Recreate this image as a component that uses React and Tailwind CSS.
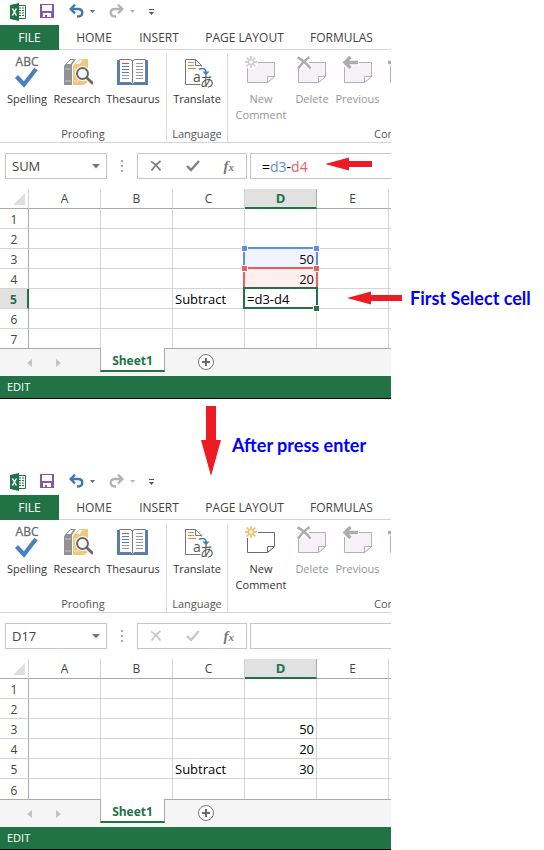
import React from "react";

const UI = "font-['Open_Sans','Noto_Sans',sans-serif]";

function ExcelLogo() {
  return (
    <svg width="16" height="18" viewBox="0 0 16 18" aria-hidden="true">
      <path d="M8 2.5h7.5v13H8z" fill="#fff" stroke="#217346" />
      <path d="M9 5h2M12 5h2M9 7.5h2M12 7.5h2M9 10h2M12 10h2M9 12.5h2M12 12.5h2" stroke="#217346" strokeWidth="1.2" />
      <path d="M0 2l9-2v18l-9-2z" fill="#217346" />
      <path d="M2.4 5.5l4 7M6.4 5.5l-4 7" stroke="#fff" strokeWidth="1.5" />
    </svg>
  );
}

function SaveIcon() {
  return (
    <svg width="14" height="14" viewBox="0 0 14 14" aria-hidden="true">
      <path d="M0 0h14v14H0z" fill="#8756a8" />
      <path d="M2 1h10v6H2zM3 9h8v4H3z" fill="#fff" />
      <path d="M5 11h2v2H5z" fill="#8756a8" />
    </svg>
  );
}

function UndoIcon({ flip, color }) {
  return (
    <svg width="15" height="14" viewBox="0 0 15 14" aria-hidden="true">
      <g transform={flip ? "translate(15 0) scale(-1 1)" : undefined} fill="none" stroke={color} strokeWidth="2.4">
        <path d="M6 .7L1.7 5 6 9.300" />
        <path d="M2 5h7c2.600 0 4.300 1.500 4.300 3.700S11.300 12.500 8 12.500" />
      </g>
    </svg>
  );
}

function Caret({ className }) {
  return (
    <svg width="5" height="3" viewBox="0 0 5 3" className={className} aria-hidden="true">
      <path d="M0 0h5L2.500 3z" fill="currentColor" />
    </svg>
  );
}

function SpellingIcon() {
  return (
    <svg width="32" height="37" viewBox="0 0 32 37" aria-hidden="true">
      <text x="16" y="12" textAnchor="middle" fontSize="12" fill="#686868" stroke="#686868" strokeWidth=".3" fontFamily="Open Sans">ABC</text>
      <path d="M5.500 22.500l7.500 8L25 15" fill="none" stroke="#4a80bd" strokeWidth="4.200" />
    </svg>
  );
}

function ResearchIcon() {
  return (
    <svg width="32" height="37" viewBox="0 0 32 37" aria-hidden="true">
      <path d="M3 12l7-7h5l-4 6v20H3z" fill="#929292" />
      <path d="M4.500 10.500l5-5h4l-4 5z" fill="#fff" stroke="#929292" />
      <path d="M4 15h6M4 27h6" stroke="#c4c4c4" />
      <path d="M12 12l7-7h8v23l-4 3H12z" fill="#edc87e" />
      <path d="M13.500 10.500l5-5h4l-4 5z" fill="#fff" stroke="#edc87e" />
      <path d="M13 15h5M13 27h5" stroke="#f7e3b9" />
      <circle cx="21.500" cy="19.500" r="6" fill="#fff" stroke="#fff" strokeWidth="3" />
      <path d="M26 24l6.500 6" stroke="#fff" strokeWidth="5" />
      <circle cx="21.500" cy="19.500" r="5.500" fill="#f6f6f6" stroke="#696969" strokeWidth="2" />
      <path d="M25.500 23.500l6.500 6.200" stroke="#696969" strokeWidth="2.800" />
    </svg>
  );
}

function ThesaurusIcon() {
  return (
    <svg width="32" height="37" viewBox="0 0 32 37" aria-hidden="true">
      <path d="M0 6h31v25H0z" fill="#4a80bd" />
      <path d="M2.500 5.500h11l2 1.500 2-1.500h11v23h-11l-2 1.500-2-1.500h-11z" fill="#fff" stroke="#7a7a7a" />
      <path d="M15.500 7v22" stroke="#7a7a7a" />
      <path d="M5 9.500h7" stroke="#d65532" strokeWidth="1.200" />
      <path d="M5 12.500h7M5 15.500h7M5 18.500h7" stroke="#4a80bd" />
      <path d="M5 21.500h7M5 24.500h7M19 9.500h7M19 12.500h7M19 15.500h7M19 18.500h7M19 21.500h7M19 24.500h7" stroke="#9a9a9a" />
    </svg>
  );
}

function TranslateIcon() {
  return (
    <svg width="32" height="37" viewBox="0 0 32 37" aria-hidden="true">
      <path d="M4.500 5.500h10l6 6v19h-16z" fill="#fff" />
      <path d="M20.500 12.500v-1l-6-6h-10v25h15" fill="none" stroke="#777" />
      <path d="M14.500 5.500v6h6" fill="none" stroke="#777" />
      <path d="M7 8.500h6M7 11.500h6M7 14.500h8" stroke="#e8893d" strokeWidth="1.200" />
      <path d="M18 15.500c4-2 7-1 7 3" fill="none" stroke="#4a80bd" strokeWidth="1.700" />
      <path d="M21.500 17.500h7L25 21.500z" fill="#4a80bd" />
      <path d="M20 22h12v11H20z" fill="#fff" />
      <text x="12" y="28" fontSize="14" fill="#555" fontFamily="Open Sans">a</text>
      <text x="19" y="32" fontSize="14" fill="#555" fontFamily="Noto Sans CJK JP">あ</text>
    </svg>
  );
}

function NoteIcon({ kind, active }) {
  const line = active ? "#6a6a6a" : "#b5b0b5";
  const mark = "#adadad";
  return (
    <svg width="32" height="37" viewBox="0 0 32 37" aria-hidden="true">
      <path d="M2.500 8.500h27v14l-7 6h-20z" fill={active ? "#fff" : "#f6f0f7"} stroke={line} />
      <path d="M22.500 28.500v-6h7z" fill="#fff" stroke={line} />
      {kind === "new" && (
        <g>
          <circle cx="6" cy="8" r="7" fill="#fff" />
          <path
            d="M6 2v4M6 10v4M0 8h4M8 8h4M1.700 3.700l3 3M7.300 9.300l3 3M10.300 3.700l-3 3M4.700 9.300l-3 3"
            stroke={active ? "#eec36f" : "#cfcfcf"}
            strokeWidth="1.800"
          />
          <circle cx="6" cy="8" r="2.400" fill="#fff" stroke={active ? "#eec36f" : "#cfcfcf"} strokeWidth="1.400" />
        </g>
      )}
      {kind === "delete" && (
        <g fill="none">
          <path d="M1.500 3.500c5 2 9 6 13 11M13.500 3C9 6 5 10 2 14.500" stroke="#fff" strokeWidth="6" />
          <path d="M1.500 3.500c5 2 9 6 13 11M13.500 3C9 6 5 10 2 14.500" stroke={mark} strokeWidth="2.600" />
        </g>
      )}
      {kind === "previous" && (
        <g fill="none">
          <path d="M8.500 2L2.500 8.500l6 6.500M3 8.500h14" stroke="#fff" strokeWidth="6" />
          <path d="M8.500 3L3 8.500 8.500 14M3 8.500h13" stroke={mark} strokeWidth="3.400" />
        </g>
      )}
      {kind === "next" && (
        <g fill="none">
          <path d="M0 8.500h15M10 3l5.500 5.500L10 14" stroke="#fff" strokeWidth="6" />
          <path d="M0 8.500h15M10 3l5.500 5.500L10 14" stroke={mark} strokeWidth="3.400" />
        </g>
      )}
    </svg>
  );
}

function RibbonButton({ icon, label, width, disabled, iconOnly }) {
  return (
    <button
      type="button"
      disabled={disabled}
      aria-label={iconOnly ? label : undefined}
      className={`flex shrink-0 flex-col items-center text-[11px] leading-4 ${width} ${disabled ? "text-[#959595]" : "text-[#333]"}`}
    >
      {icon}
      {!iconOnly && (
        <span className="flex flex-col items-center whitespace-nowrap">
          {label.split("\n").map((part) => (
            <span key={part}>{part}</span>
          ))}
        </span>
      )}
    </button>
  );
}

function RibbonGroup({ title, className, children }) {
  return (
    <section className={`flex shrink-0 flex-col border-[#dcdcdc] ${className}`}>
      <div className="flex flex-1 items-start justify-center">{children}</div>
      <h3 className="text-center text-[11px] leading-4 text-[#555]">{title}</h3>
    </section>
  );
}

function Tab({ width, children }) {
  return (
    <button type="button" role="tab" className={`shrink-0 whitespace-nowrap border-b border-[#d4d4d4] pt-0.5 ${width}`}>
      {children}
    </button>
  );
}

function Ribbon({ canComment }) {
  return (
    <header>
      <div className="flex h-[25px] items-start pt-1 pl-[10px]">
        <span className="-mt-px"><ExcelLogo /></span>
        <button type="button" aria-label="Save" className="ml-[14px]"><SaveIcon /></button>
        <button type="button" aria-label="Undo" className="ml-[15px] flex items-center gap-1.5">
          <UndoIcon color="#3f76b5" />
          <Caret className="text-[#6a6a6a]" />
        </button>
        <button type="button" aria-label="Redo" disabled className="ml-[14px] flex items-center gap-1.5">
          <UndoIcon flip color="#b3b3b3" />
          <Caret className="text-[#b3b3b3]" />
        </button>
        <button type="button" aria-label="Customize" className="ml-[14px] flex flex-col items-center gap-0.5 pt-[5px] text-[#555]">
          <span className="h-px w-[5px] bg-[#555]" />
          <Caret />
        </button>
      </div>
      <nav role="tablist" className="flex h-[25px] overflow-hidden text-[12px] text-[#444]">
        <button type="button" role="tab" className="w-[59px] shrink-0 bg-[#217346] text-white">FILE</button>
        <Tab width="w-[70px]">HOME</Tab>
        <Tab width="w-[60px]">INSERT</Tab>
        <Tab width="w-[111px]">PAGE LAYOUT</Tab>
        <Tab width="w-[83px]">FORMULAS</Tab>
        <span className="flex-1 border-b border-[#d4d4d4]" />
      </nav>
      <div className="flex h-[93px] overflow-hidden border-b border-[#d4d4d4] pt-1">
        <RibbonGroup title="Proofing" className="w-[167px] border-r">
          <RibbonButton width="w-[48px]" label="Spelling" icon={<SpellingIcon />} />
          <RibbonButton width="w-[52px]" label="Research" icon={<ResearchIcon />} />
          <RibbonButton width="w-[60px]" label="Thesaurus" icon={<ThesaurusIcon />} />
        </RibbonGroup>
        <RibbonGroup title="Language" className="w-[61px] border-r">
          <RibbonButton width="w-[60px]" label="Translate" icon={<TranslateIcon />} />
        </RibbonGroup>
        <RibbonGroup title="Comments" className="w-[348px]">
          <div className="flex flex-1 pl-[3px]">
            <RibbonButton width="w-[60px]" label={"New\nComment"} disabled={!canComment} icon={<NoteIcon kind="new" active={canComment} />} />
            <RibbonButton width="w-[42px]" label="Delete" disabled icon={<NoteIcon kind="delete" />} />
            <RibbonButton width="w-[49px]" label="Previous" disabled icon={<NoteIcon kind="previous" />} />
            <RibbonButton width="w-[44px]" label="Next" disabled iconOnly icon={<NoteIcon kind="next" />} />
          </div>
        </RibbonGroup>
      </div>
    </header>
  );
}

function FormulaBar({ name, editing, id }) {
  const tone = editing ? "text-[#808080]" : "text-[#c8c8c8]";
  return (
    <div className="flex h-[46px] items-start pt-[10px] pl-[5px]">
      <div className="flex h-[26px] w-[102px] items-center border border-[#c6c6c6] pr-1.5">
        <input id={`${id}-name`} aria-label="Name box" defaultValue={name} className="min-w-0 flex-1 pt-0.5 pl-1.5 text-[13px] text-[#444] outline-none" />
        <button type="button" aria-label="Choose name" className="text-[#777]">
          <svg width="8" height="5" viewBox="0 0 8 5" aria-hidden="true"><path d="M0 0h8L4 4.500z" fill="currentColor" /></svg>
        </button>
      </div>
      <div className="flex h-[26px] w-[30px] flex-col items-center justify-center gap-[3px]">
        <span className="size-0.5 bg-[#aaa]" />
        <span className="size-0.5 bg-[#aaa]" />
        <span className="size-0.5 bg-[#aaa]" />
      </div>
      <div className="flex h-[26px] w-[110px] items-center justify-around border border-[#c6c6c6]">
        <button type="button" aria-label="Cancel" className={tone}>
          <svg width="12" height="12" viewBox="0 0 12 12" aria-hidden="true"><path d="M1 1.500c4 2 6.500 5 9.500 9M10.500 1C7 3.500 4 7 1.500 10.500" fill="none" stroke="currentColor" strokeWidth="1.900" /></svg>
        </button>
        <button type="button" aria-label="Enter" className={tone}>
          <svg width="14" height="12" viewBox="0 0 14 12" aria-hidden="true"><path d="M1 6l4 4 8-9" fill="none" stroke="currentColor" strokeWidth="2.400" /></svg>
        </button>
        <button type="button" aria-label="Insert function" className="font-['Liberation_Serif',serif] text-[15px] leading-none font-bold text-[#777] italic">
          f<span className="text-[11px]">x</span>
        </button>
      </div>
      <div className="ml-[3px] flex h-[26px] min-w-0 flex-1 items-center border border-r-0 border-[#c6c6c6] pl-[11px] text-[14px] text-black">
        {editing ? (
          <div role="textbox" aria-label="Formula" contentEditable suppressContentEditableWarning className="outline-none">
            =<span className="text-[#5f8cec]">d3</span>-<span className="text-[#ec5e5e]">d4</span>
          </div>
        ) : (
          <input id={`${id}-formula`} aria-label="Formula" className="w-full outline-none" />
        )}
      </div>
    </div>
  );
}

const COLUMNS = ["A", "B", "C", "D", "E"];

function Handle({ className }) {
  return <span className={`absolute size-[7px] border border-white ${className}`} />;
}

function Selection() {
  return (
    <>
      <div className="absolute top-[58px] left-[243px] h-[22px] w-[75px] border-2 border-[#5f8cec] bg-[#5f8cec]/10" />
      <div className="absolute top-[78px] left-[243px] h-[22px] w-[75px] border-2 border-[#ec5e5e] bg-[#ec5e5e]/10" />
      <div className="absolute top-[98px] left-[243px] h-[22px] w-[75px] border-2 border-[#217346]" />
      <Handle className="top-14 left-[241px] bg-[#5f8cec]" />
      <Handle className="top-14 left-[313px] bg-[#5f8cec]" />
      <Handle className="top-[76px] left-[241px] bg-[#ec5e5e]" />
      <Handle className="top-[76px] left-[313px] bg-[#ec5e5e]" />
      <Handle className="top-[116px] left-[313px] bg-[#217346]" />
    </>
  );
}

function Grid({ rows, editing }) {
  return (
    <div className="relative overflow-hidden">
      <table className="w-[461px] table-fixed border-separate border-spacing-0 text-[13px] leading-[17px]">
        <colgroup>
          <col className="w-[29px]" />
          {COLUMNS.map((c) => <col key={c} className="w-[72px]" />)}
          <col className="w-[72px]" />
        </colgroup>
        <thead>
          <tr className="h-5 text-[12px] text-[#444]">
            <th className="border-r border-b border-r-[#d4d4d4] border-b-[#ababab] p-0">
              <svg width="12" height="12" viewBox="0 0 12 12" className="ml-[13px] block" aria-hidden="true"><path d="M12 0v12H0z" fill="#dfdfdf" /></svg>
            </th>
            {COLUMNS.map((c) => (
              <th
                key={c}
                className={
                  c === "D"
                    ? "border-r border-b-2 border-r-[#ababab] border-b-[#217346] bg-[#e1e1e1] p-0 text-[13px] leading-[17px] font-bold text-[#217346]"
                    : "border-r border-b border-r-[#d4d4d4] border-b-[#ababab] p-0 leading-[19px] font-normal"
                }
              >
                {c}
              </th>
            ))}
            <th className="border-b border-b-[#ababab] p-0" />
          </tr>
        </thead>
        <tbody>
          {rows.map((row, i) => {
            const last = i === rows.length - 1;
            const line = last ? "" : "border-b";
            const height = last && editing ? "h-[19px]" : "h-5";
            const current = editing && i === 4;
            return (
              <tr key={i} className={height}>
                <th
                  className={`px-0 pt-0.5 pb-0 text-[12px] ${line} border-b-[#d4d4d4] ${
                    current
                      ? "border-r-2 border-r-[#217346] bg-[#e1e1e1] font-bold text-[#217346]"
                      : "border-r border-r-[#ababab] font-normal text-[#444]"
                  }`}
                >
                  {i + 1}
                </th>
                {COLUMNS.map((c) => (
                  <td
                    key={c}
                    className={`border-r border-[#d4d4d4] px-0.5 pt-0.5 pb-0 whitespace-nowrap text-black ${line} ${
                      typeof row[c] === "number" ? "text-right" : "text-left"
                    }`}
                  >
                    {row[c]}
                  </td>
                ))}
                <td className={`border-[#d4d4d4] p-0 ${line}`} />
              </tr>
            );
          })}
        </tbody>
      </table>
      {editing && <Selection />}
    </div>
  );
}

function SheetTabs() {
  return (
    <div className="flex h-7 bg-[#f5f5f5]">
      <div className="flex w-[100px] items-center gap-6 border-t border-[#ababab] pl-[27px] text-[#c4c4c4]">
        <button type="button" aria-label="Previous sheet"><svg width="5" height="8" viewBox="0 0 5 8" aria-hidden="true"><path d="M5 0v8L0 4z" fill="currentColor" /></svg></button>
        <button type="button" aria-label="Next sheet"><svg width="5" height="8" viewBox="0 0 5 8" aria-hidden="true"><path d="M0 0v8l5-4z" fill="currentColor" /></svg></button>
      </div>
      <button type="button" className="mb-1 w-[65px] border-x border-b-2 border-x-[#ababab] border-b-[#217346] bg-white pt-1 text-[12px] leading-4 font-bold text-[#217346]">
        Sheet1
      </button>
      <div className="flex flex-1 items-center border-t border-[#ababab] pb-0.5 pl-8">
        <button type="button" aria-label="New sheet">
          <svg width="18" height="18" viewBox="0 0 18 18" aria-hidden="true">
            <circle cx="9" cy="9" r="7.500" fill="#fff" stroke="#777" />
            <path d="M9 5v8M5 9h8" stroke="#6a6a6a" strokeWidth="2" />
          </svg>
        </button>
      </div>
    </div>
  );
}

function ExcelWindow({ id, name, editing = false, rows }) {
  return (
    <section className="w-full max-w-[391px] overflow-hidden bg-white">
      <Ribbon canComment={!editing} />
      <FormulaBar id={id} name={name} editing={editing} />
      <Grid rows={rows} editing={editing} />
      <SheetTabs />
      <footer className="h-[23px] border-b border-black bg-[#217346] pl-[7px] text-[11px] leading-[22px] text-white">EDIT</footer>
    </section>
  );
}

const NOTE = "font-['Lato',sans-serif] text-[18px] leading-5 font-bold whitespace-nowrap text-[#0000ff]";

function LeftArrow({ width }) {
  return (
    <svg width={width} height="14" viewBox={`0 0 ${width} 14`} className="shrink-0" aria-hidden="true">
      <path d={`M0 7L24 0.500V4H${width}V10H24V13.500z`} fill="#ed1c24" />
    </svg>
  );
}

const before = [{}, {}, { D: 50 }, { D: 20 }, { C: "Subtract", D: "=d3-d4" }, {}, {}];
const after = [{}, {}, { D: 50 }, { D: 20 }, { C: "Subtract", D: 30 }, {}];

export default function App() {
  return (
    <main className={`bg-white ${UI}`}>
      <div className="relative">
        <ExcelWindow id="before" name="SUM" editing rows={before} />
        <div className="absolute top-[157px] left-[325px]"><LeftArrow width={47} /></div>
        <div className="absolute top-[288px] left-[347px] flex items-center gap-2">
          <LeftArrow width={55} />
          <p className={NOTE}>First Select cell</p>
        </div>
      </div>
      <div className="relative z-10 flex h-[71px] items-start pt-[7px] pl-[201px]">
        <svg width="20" height="70" viewBox="0 0 20 70" className="shrink-0" aria-hidden="true">
          <path d="M5 0h10v34h5L10 70 0 34h5z" fill="#ed1c24" />
        </svg>
        <p className={`mt-[29px] ml-[11px] ${NOTE}`}>After press enter</p>
      </div>
      <ExcelWindow id="after" name="D17" rows={after} />
    </main>
  );
}
